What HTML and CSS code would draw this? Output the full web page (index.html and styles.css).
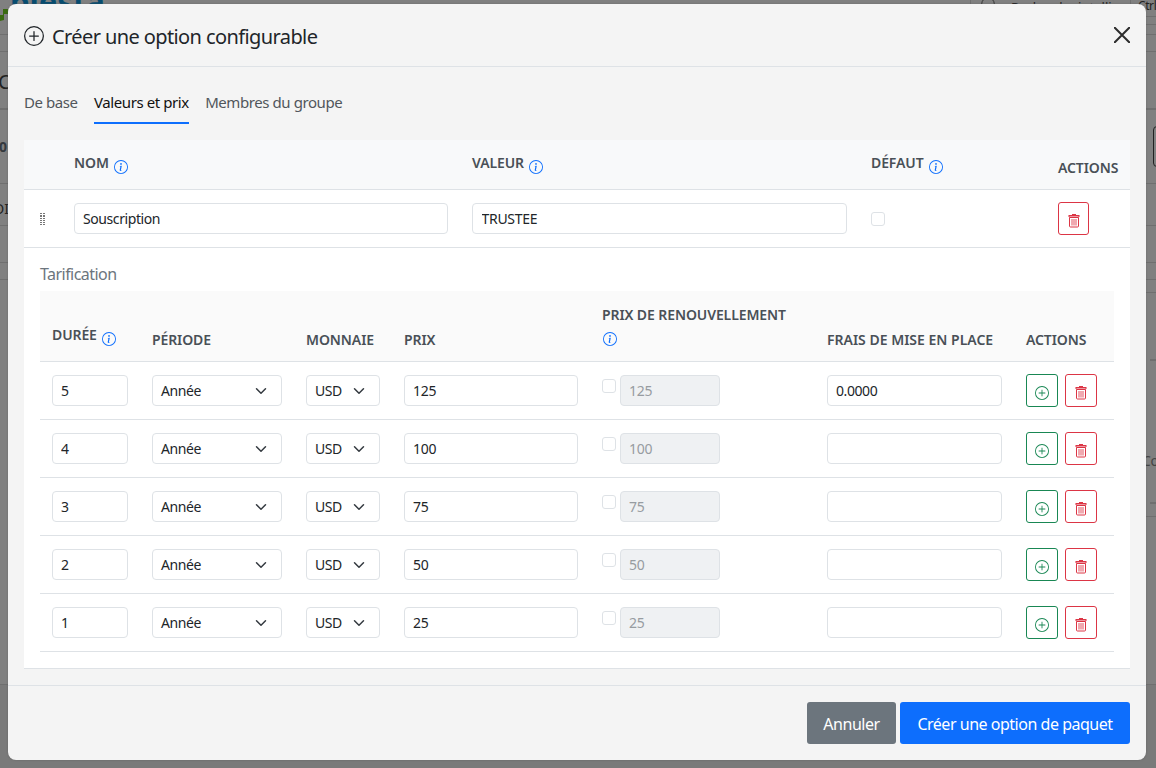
FILE: index.html
```
<!DOCTYPE html>
<html lang="fr">
<head>
<meta charset="utf-8">
<title>Créer une option configurable</title>
<link rel="stylesheet" href="styles.css">
</head>
<body>
<svg class="sprite" aria-hidden="true">
  <symbol id="plus-circle" viewBox="0 0 16 16"><path d="M8 15A7 7 0 1 1 8 1a7 7 0 0 1 0 14m0 1A8 8 0 1 0 8 0a8 8 0 0 0 0 16"/><path d="M8 4a.5.5 0 0 1 .5.5v3h3a.5.5 0 0 1 0 1h-3v3a.5.5 0 0 1-1 0v-3h-3a.5.5 0 0 1 0-1h3v-3A.5.5 0 0 1 8 4"/></symbol>
  <symbol id="info" viewBox="0 0 16 16"><path d="M8 15A7 7 0 1 1 8 1a7 7 0 0 1 0 14m0 1A8 8 0 1 0 8 0a8 8 0 0 0 0 16"/><path d="m8.930 6.588-2.290.287-.082.380.450.083c.294.070.352.176.288.469l-.738 3.468c-.194.897.105 1.319.808 1.319.545 0 1.178-.252 1.465-.598l.088-.416c-.200.176-.492.246-.686.246-.275 0-.375-.193-.304-.533zM9 4.500a1 1 0 1 1-2 0 1 1 0 0 1 2 0"/></symbol>
  <symbol id="trash" viewBox="0 0 12 14"><path d="M1.500 3.500h9v8.500a1 1 0 0 1-1 1h-7a1 1 0 0 1-1-1z" fill="none" stroke="currentColor"/><path d="M4 0h4v1H4z"/><path d="M1 2h10v1.500H1z" opacity=".5"/><path d="M.5 1h11v1H.5zM.5 2h1v1h-1zM10.500 2h1v1h-1z"/><path d="M3.500 5h1v6.500h-1zM5.500 5h1v6.500h-1zM7.500 5h1v6.500h-1z" opacity=".85"/></symbol>
  <symbol id="chevron" viewBox="0 0 16 16"><path d="m2 5 6 6 6-6" fill="none" stroke="#343a40" stroke-width="2" stroke-linecap="round" stroke-linejoin="round"/></symbol>
</svg>
<div class="page" aria-hidden="true">
  <span class="logo">blesta</span>
  <svg class="logo-mark" viewBox="0 0 8 22"><path d="M0 21V15h3V9h5v5H4v6z"/></svg>
  <i class="divider d1"></i><i class="divider d2"></i>
  <svg class="search-icon" viewBox="0 0 14 14"><circle cx="7" cy="7" r="6.300"/></svg>
  <span class="ghost search">Recherche intelli</span>
  <span class="ghost shortcut">Ctrl</span>
  <i class="rule r1"></i><i class="rule r2"></i><i class="rule r3"></i><i class="rule r4"></i><i class="rule r5"></i><i class="rule r6"></i><i class="rule r7"></i><i class="rule r8"></i>
  <i class="rule side s1"></i><i class="rule side s2"></i><i class="rule side s3"></i><i class="rule side s4"></i><i class="rule side s5"></i><i class="rule side s6"></i>
  <span class="ghost g1">C</span><span class="ghost g2">0</span><span class="ghost g3">DI</span><span class="ghost g4">Co</span>
  <i class="box"></i>
</div>
<main class="modal">
  <header class="modal-header">
    <svg class="title-icon"><use href="#plus-circle"/></svg>
    <h1>Créer une option configurable</h1>
    <svg class="close" viewBox="0 0 16 16"><path d="m.8.8 14.400 14.400M15.200.8.8 15.200"/></svg>
  </header>
  <section class="modal-body">
    <nav class="tabs"><a>De base</a><a class="active">Valeurs et prix</a><a>Membres du groupe</a></nav>
    <div class="values">
      <div class="value-row value-head">
        <span></span>
        <span class="with-info"><b>NOM</b><svg class="info"><use href="#info"/></svg></span>
        <span class="with-info"><b>VALEUR</b><svg class="info"><use href="#info"/></svg></span>
        <span class="with-info"><b>DÉFAUT</b><svg class="info"><use href="#info"/></svg></span>
        <b class="low">ACTIONS</b>
      </div>
      <div class="value-row value-line">
        <svg class="grip" viewBox="0 0 5 12"><path d="M0 0h2v1H0zM0 2h2v2H0zM0 5h2v1H0zM0 7h2v1H0zM0 9h2v1H0zM0 11h2v1H0zM3 0h2v1H3zM3 2h2v2H3zM3 5h2v1H3zM3 7h2v1H3zM3 9h2v1H3zM3 11h2v1H3z"/></svg>
        <span><input class="field" value="Souscription"></span>
        <span><input class="field caps" value="TRUSTEE"></span>
        <span><input type="checkbox" class="check"></span>
        <span><button class="icon-btn danger narrow"><svg class="bin"><use href="#trash"/></svg></button></span>
      </div>
      <div class="pricing">
        <h2>Tarification</h2>
        <div class="price-row price-head">
          <span class="with-info"><b>DURÉE</b><svg class="info"><use href="#info"/></svg></span>
          <b>PÉRIODE</b><b>MONNAIE</b><b>PRIX</b>
          <span class="renew-head"><b>PRIX DE RENOUVELLEMENT</b><svg class="info"><use href="#info"/></svg></span>
          <b class="fees">FRAIS DE MISE EN PLACE</b><b>ACTIONS</b>
        </div>
        <div id="prices"></div>
      </div>
    </div>
  </section>
  <footer class="modal-footer"><button class="btn secondary">Annuler</button><button class="btn primary">Créer une option de paquet</button></footer>
</main>
<script src="app.js"></script>
</body>
</html>
```
FILE: app.js
```
const rows = [[5, 125, '0.0000'], [4, 100, ''], [3, 75, ''], [2, 50, ''], [1, 25, '']];
const select = text => `<span><span class="select"><span>${text}</span><svg><use href="#chevron"/></svg></span></span>`;
document.getElementById('prices').innerHTML = rows.map(([years, price, fee]) => `
  <div class="price-row price-line">
    <span><input class="field number" value="${years}"></span>
    ${select('Année')}${select('USD')}
    <span><input class="field number" value="${price}"></span>
    <span class="renew"><input type="checkbox" class="check"><input class="field number" disabled value="${price}"></span>
    <span><input class="field" value="${fee}"></span>
    <span class="actions"><button class="icon-btn success"><svg class="add"><use href="#plus-circle"/></svg></button><button class="icon-btn danger"><svg class="bin"><use href="#trash"/></svg></button></span>
  </div>`).join('');
```
FILE: styles.css
```
* { box-sizing: border-box; }
body { margin: 0; height: 768px; overflow: hidden; background: #7c7c7c; color: #212529; font-family: "Noto Sans", sans-serif; font-size: 14px; }
svg { fill: currentColor; flex: none; display: block; }
input, button { font: inherit; color: inherit; margin: 0; letter-spacing: inherit; }
.sprite { position: absolute; width: 0; height: 0; }

/* dimmed page behind the dialog */
.page { position: absolute; inset: 0; overflow: hidden; background: linear-gradient(#808080 685px, #7a7a7a 685px); }
.page > * { position: absolute; }
.logo { left: 10px; top: -17px; font-size: 31px; line-height: 36px; font-weight: 700; color: #064c70; }
.logo-mark { left: 0; top: 0; width: 8px; height: 22px; fill: #3a6a10; }
.divider { width: 1px; top: 0; height: 16px; background: #6f6f6f; }
.d1 { left: 970px; } .d2 { left: 1130px; }
.search-icon { left: 981px; top: -3px; width: 14px; height: 14px; fill: none; stroke: #333; }
.ghost { color: #222; line-height: 18px; white-space: nowrap; }
.search { left: 1011px; top: -2px; font-size: 13px; }
.shortcut { left: 1138px; top: -3px; font-size: 12px; letter-spacing: -.4px; }
.rule { left: 0; right: 0; height: 1px; background: #6f6f6f; }
.r1 { top: 34px; } .r2 { top: 51px; } .r3 { top: 108px; height: 2px; } .r4 { top: 183px; } .r5 { top: 225px; } .r6 { top: 684px; } .r7 { top: 262px; } .r8 { top: 279px; }
.side { left: 1146px; }
.s1 { top: 16px; } .s2 { top: 24px; } .s3 { top: 292px; } .s4 { top: 359px; left: 1150px; height: 2px; } .s5 { top: 502px; left: 1150px; height: 2px; } .s6 { top: 516px; }
.g1 { left: -2px; top: 73px; font-size: 20px; }
.g2 { left: -1px; top: 138px; font-weight: 700; color: #34393e; }
.g3 { left: -6px; top: 200px; }
.g4 { left: 1142px; top: 452px; color: #444; letter-spacing: -.3px; }
.box { left: 1153px; top: 126px; width: 30px; height: 41px; border: 1px solid #222; border-radius: 4px; }

.modal { position: absolute; left: 8px; top: 4px; width: 1138px; height: 756px; background: #f4f4f4; border-radius: 8px; display: flex; flex-direction: column; box-shadow: 0 0 2px #5559; }
.modal-header { height: 63px; border-bottom: 1px solid #dee2e6; padding: 0 16px; display: flex; align-items: center; }
.title-icon { width: 20px; height: 20px; margin: 1px 8px 0 0; }
h1 { font-size: 20px; line-height: 30px; font-weight: 400; margin: 4px 0 0; flex: 1; letter-spacing: -.6px; }
.close { width: 16px; height: 16px; fill: none; stroke: #2c2c2c; stroke-width: 2; stroke-linecap: round; }
.modal-body { flex: 1; padding: 16px 16px 0; }
.tabs { display: flex; height: 41px; margin-bottom: 16px; color: #51565b; font-size: 15px; letter-spacing: -.42px; gap: 16.400px; }
.tabs a { line-height: 39px; height: 41px; }
.tabs .active { color: #111; border-bottom: 2px solid #0d6efd; }

.values { background: #fff; border-bottom: 1px solid #dee2e6; height: 529px; }
.value-row { display: grid; grid-template-columns: 38px 398px 399px 187px 84px; border-bottom: 1px solid #dee2e6; }
.value-row > *, .price-row > * { padding: 0 12px; }
.value-head { height: 50px; background: #f8f9fa; }
b { font-weight: 600; font-size: 14px; line-height: 20px; color: #495057; white-space: nowrap; letter-spacing: -.1px; }
.fees { letter-spacing: 0; }
.with-info { display: flex; gap: 5px; align-items: flex-start; padding-top: 13px !important; }
.info { width: 14px; height: 14px; color: #0d6efd; margin-top: 7px; }
.value-head .low { padding-top: 18px; }
.value-line { height: 58px; align-items: center; }
.value-line > .grip { width: 5px; height: 12px; margin-left: 16px; padding: 0; fill: #777; }
.field { display: block; width: 100%; height: 31px; border: 1px solid #dee2e6; border-radius: 4px; padding: 0 8px; background: #fff; font-size: 14px; letter-spacing: -.42px; outline: 0; }
.field.number { letter-spacing: -.2px; }
.field.caps { letter-spacing: -.3px; padding-left: 8.500px; }
.check { display: block; appearance: none; width: 14px; height: 14px; border: 1px solid #dee2e6; border-radius: 3px; background: #fff; }
.icon-btn { width: 32px; height: 33px; padding: 5px 0 0; border: 1px solid; border-radius: 3px; background: #fff; display: grid; place-items: center; }
.narrow { width: 31px; }
.danger { color: #dc3545; }
.success { color: #198754; }
.bin { width: 12px; height: 14px; }
.add { width: 14px; height: 14px; }

.pricing { padding: 16px; }
h2 { margin: 0 0 6px; font-size: 16px; line-height: 21px; font-weight: 400; color: #6c757d; letter-spacing: -.55px; }
.price-row { display: grid; grid-template-columns: 100px 154px 98px 198px 225px 199px 100px; border-bottom: 1px solid #dee2e6; }
.price-head { height: 71px; background: #fafafa; align-items: end; padding-bottom: 11px; }
.price-head .with-info { padding: 0 12px 5px; }
.price-head .with-info .info { margin-bottom: -1px; }
.price-line { height: 58px; align-items: center; }
.renew-head .info { margin: 7px 0 4px 1px; }
.select { height: 31px; border: 1px solid #dee2e6; border-radius: 4px; padding: 0 14px 0 8px; display: flex; align-items: center; justify-content: space-between; letter-spacing: -.42px; }
.select svg { width: 12px; height: 12px; }
.renew { display: flex; gap: 4px; }
.renew .check { margin-top: 4px; }
.renew .field { width: 100px; background: #eff1f3; color: #979ca1; }
.actions { display: flex; gap: 7px; }

.modal-footer { height: 75px; border-top: 1px solid #dee2e6; padding: 16px; display: flex; justify-content: flex-end; gap: 4px; }
.btn { height: 42px; border: 0; border-radius: 3px; color: #fff; font-size: 16px; padding: 2px 0 0; letter-spacing: -.48px; }
.secondary { width: 89px; background: #6c757d; }
.primary { width: 230px; background: #0d6efd; }
```
